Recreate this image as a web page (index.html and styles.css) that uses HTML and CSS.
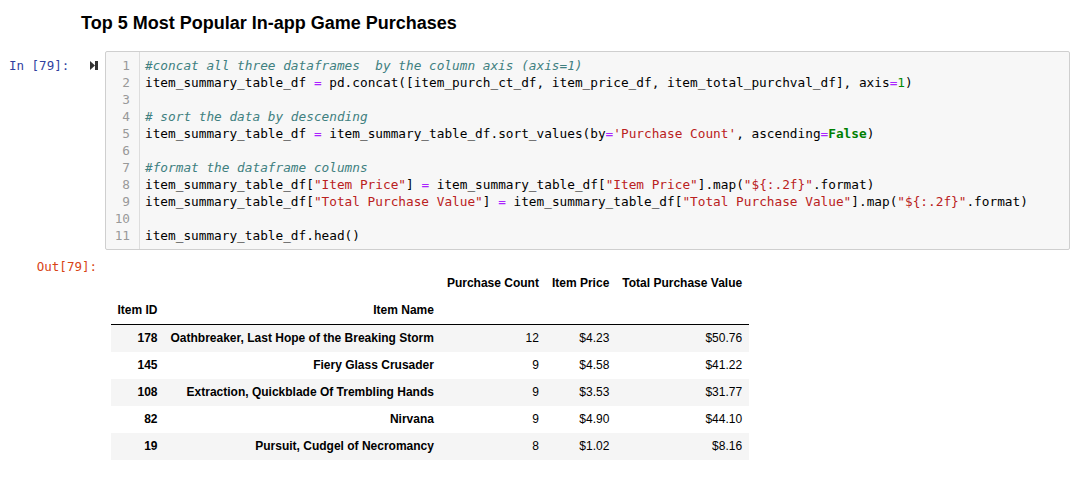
FILE: index.html
```html
<!DOCTYPE html>
<html>
<head>
<meta charset="utf-8">
<link rel="stylesheet" href="styles.css">
</head>
<body>
<div class="nb">
  <h3 class="title">Top 5 Most Popular In-app Game Purchases</h3>

  <div class="cell-in">
    <div class="prompt-in">
      <span class="in-label">In [79]:</span>
      <svg class="run" width="8" height="9" viewBox="0 0 8 9"><path d="M0 0 L5 4.5 L0 9 Z" fill="#333"/><rect x="5" y="0" width="3" height="9" fill="#333"/></svg>
    </div>
    <div class="code-box">
      <div class="gutter">
        <div>1</div><div>2</div><div>3</div><div>4</div><div>5</div><div>6</div><div>7</div><div>8</div><div>9</div><div>10</div><div>11</div>
      </div>
      <div class="code">
        <div class="ln"><span class="c">#concat all three dataframes  by the column axis (axis=1)</span></div>
        <div class="ln">item_summary_table_df <span class="o">=</span> pd.concat([item_purch_ct_df, item_price_df, item_total_purchval_df], axis<span class="o">=</span><span class="n">1</span>)</div>
        <div class="ln"> </div>
        <div class="ln"><span class="c"># sort the data by descending</span></div>
        <div class="ln">item_summary_table_df <span class="o">=</span> item_summary_table_df.sort_values(by<span class="o">=</span><span class="s">'Purchase Count'</span>, ascending<span class="o">=</span><span class="k">False</span>)</div>
        <div class="ln"> </div>
        <div class="ln"><span class="c">#format the dataframe columns</span></div>
        <div class="ln">item_summary_table_df[<span class="s">"Item Price"</span>] <span class="o">=</span> item_summary_table_df[<span class="s">"Item Price"</span>].map(<span class="s">"${:.2f}"</span>.format)</div>
        <div class="ln">item_summary_table_df[<span class="s">"Total Purchase Value"</span>] <span class="o">=</span> item_summary_table_df[<span class="s">"Total Purchase Value"</span>].map(<span class="s">"${:.2f}"</span>.format)</div>
        <div class="ln"> </div>
        <div class="ln">item_summary_table_df.head()</div>
      </div>
    </div>
  </div>

  <div class="cell-out">
    <div class="prompt-out">Out[79]:</div>
    <div class="out-area">
      <table class="df">
        <thead>
          <tr>
            <th></th><th></th><th>Purchase Count</th><th>Item Price</th><th>Total Purchase Value</th>
          </tr>
          <tr class="names">
            <th>Item ID</th><th>Item Name</th><th></th><th></th><th></th>
          </tr>
        </thead>
        <tbody>
          <tr><th>178</th><th>Oathbreaker, Last Hope of the Breaking Storm</th><td>12</td><td>$4.23</td><td>$50.76</td></tr>
          <tr><th>145</th><th>Fiery Glass Crusader</th><td>9</td><td>$4.58</td><td>$41.22</td></tr>
          <tr><th>108</th><th>Extraction, Quickblade Of Trembling Hands</th><td>9</td><td>$3.53</td><td>$31.77</td></tr>
          <tr><th>82</th><th>Nirvana</th><td>9</td><td>$4.90</td><td>$44.10</td></tr>
          <tr><th>19</th><th>Pursuit, Cudgel of Necromancy</th><td>8</td><td>$1.02</td><td>$8.16</td></tr>
        </tbody>
      </table>
    </div>
  </div>
</div>
</body>
</html>
```

FILE: styles.css
```css
html, body {
  margin: 0;
  padding: 0;
  background: #fff;
}

body {
  font-family: "Liberation Sans", Arial, sans-serif;
  color: #000;
}

.nb {
  width: 1091px;
}

.title {
  margin: 0;
  padding: 12px 0 0 81px;
  font-size: 18px;
  line-height: 22px;
  font-weight: bold;
  color: #000;
}

.cell-in {
  display: flex;
  margin-top: 17px;
}

.prompt-in {
  width: 105px;
  flex: none;
  display: flex;
  align-items: flex-start;
  padding-top: 6px;
  box-sizing: border-box;
}

.in-label {
  font-family: "DejaVu Sans Mono", monospace;
  font-size: 12.5px;
  line-height: 17px;
  color: #303f9f;
  padding-left: 9px;
  width: 81px;
}

.run {
  margin-top: 4px;
}

.code-box {
  width: 965px;
  flex: none;
  box-sizing: border-box;
  border: 1px solid #cfcfcf;
  border-radius: 2px;
  background: #f7f7f7;
  display: flex;
}

.gutter {
  width: 34px;
  box-sizing: border-box;
  border-right: 1px solid #ddd;
  padding: 5px 9px 5px 0;
  text-align: right;
  font-family: "DejaVu Sans Mono", monospace;
  font-size: 12.75px;
  line-height: 17px;
  color: #999;
}

.code {
  padding: 5px 0 5px 5px;
  font-family: "DejaVu Sans Mono", monospace;
  font-size: 12.75px;
  line-height: 17px;
  color: #000;
}

.ln {
  height: 17px;
  white-space: pre;
}

.c { color: #408080; font-style: italic; }
.o { color: #aa22ff; }
.s { color: #ba2121; }
.n { color: #008800; }
.k { color: #008000; font-weight: bold; }

.cell-out {
  display: flex;
  margin-top: 8px;
}

.prompt-out {
  width: 105px;
  flex: none;
  box-sizing: border-box;
  padding-right: 8px;
  text-align: right;
  font-family: "DejaVu Sans Mono", monospace;
  font-size: 12.5px;
  line-height: 17px;
  color: #d84315;
}

.out-area {
  padding: 12px 0 0 6px;
}

.df {
  border-collapse: collapse;
  font-size: 12px;
  color: #000;
}

.df th, .df td {
  text-align: right;
  padding: 6px 6.5px;
  line-height: 15px;
  height: 27px;
  box-sizing: border-box;
  white-space: nowrap;
}

.df th {
  font-weight: bold;
}

.df td {
  font-weight: normal;
}

.df thead {
  border-bottom: 1px solid #000;
}

.df thead tr.names th {
  height: 26px;
}

.df tbody tr:nth-child(odd) {
  background: #f5f5f5;
}
```
